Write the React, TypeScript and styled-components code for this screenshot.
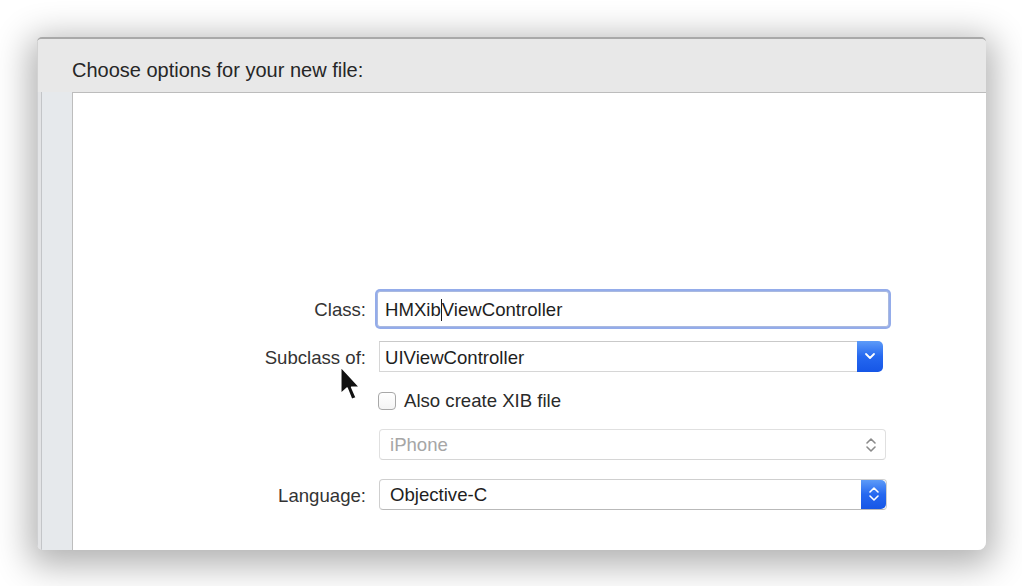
import styled, { createGlobalStyle } from "styled-components";

const GlobalStyle = createGlobalStyle`
  html, body {
    margin: 0;
    padding: 0;
    background: #ffffff;
    overflow: hidden;
  }
  body {
    font-family: "Liberation Sans", Arial, sans-serif;
  }
`;

interface RowProps {
  /** Space above the row, in px */
  $mt: number;
  /** Row height, in px */
  $h: number;
}

const ChevronDown = () => (
  <svg width="12" height="8" viewBox="0 0 12 8">
    <polyline
      points="2,2 6,6 10,2"
      fill="none"
      stroke="#ffffff"
      strokeWidth="1.8"
      strokeLinecap="round"
      strokeLinejoin="round"
    />
  </svg>
);

const UpDown = ({ color }: { color: string }) => (
  <svg width="12" height="18" viewBox="0 0 12 18">
    <polyline
      points="2,7 6,3 10,7"
      fill="none"
      stroke={color}
      strokeWidth="1.6"
      strokeLinecap="round"
      strokeLinejoin="round"
    />
    <polyline
      points="2,11 6,15 10,11"
      fill="none"
      stroke={color}
      strokeWidth="1.6"
      strokeLinecap="round"
      strokeLinejoin="round"
    />
  </svg>
);

/**
 * Xcode "new file" options sheet
 */
const App = () => {
  return (
    <>
      <GlobalStyle />
      <Page>
        <Window>
          <Header>Choose options for your new file:</Header>
          <Body>
            <LeftStrip>
              <StripInner />
            </LeftStrip>
            <Content>
              <Row $mt={197} $h={37}>
                <Label>Class:</Label>
                <TextField>
                  HMXib
                  <Caret />
                  ViewController
                </TextField>
              </Row>
              <Row $mt={13} $h={32}>
                <Label>Subclass of:</Label>
                <ComboBox>
                  <ComboText>UIViewController</ComboText>
                  <BlueButton $w={26}>
                    <ChevronDown />
                  </BlueButton>
                </ComboBox>
              </Row>
              <Row $mt={18} $h={20}>
                <span />
                <CheckRow>
                  <CheckBox />
                  <CheckLabel>Also create XIB file</CheckLabel>
                </CheckRow>
              </Row>
              <Row $mt={19} $h={31}>
                <span />
                <PopUp $disabled>
                  <PopText $disabled>iPhone</PopText>
                  <PlainArrows>
                    <UpDown color="#8a8a8a" />
                  </PlainArrows>
                </PopUp>
              </Row>
              <Row $mt={18} $h={32}>
                <Label>Language:</Label>
                <PopUp>
                  <PopText>Objective-C</PopText>
                  <BlueButton $w={25}>
                    <UpDown color="#ffffff" />
                  </BlueButton>
                </PopUp>
              </Row>
            </Content>
          </Body>
          <Pointer width="23" height="37" viewBox="0 0 20 32">
            <path
              d="M1.5,1.5 L1.5,25 L7,20 L11,30 L15,28.3 L11,19.3 L18,19.3 Z"
              fill="#111111"
              stroke="#ffffff"
              strokeWidth="1.4"
              strokeLinejoin="round"
            />
          </Pointer>
        </Window>
      </Page>
    </>
  );
};

export default App;

const Page = styled.div`
  width: 1022px;
  height: 586px;
  box-sizing: border-box;
  padding: 37px 36px 36px 37px;
  background: #ffffff;
`;

const Window = styled.div`
  position: relative;
  width: 949px;
  height: 513px;
  display: flex;
  flex-direction: column;
  background: #e8e8e8;
  border-radius: 5px 5px 8px 6px;
  border-top: 2px solid #a9a9a9;
  box-sizing: border-box;
  box-shadow: 0 8px 34px 8px rgba(0, 0, 0, 0.3);
  overflow: hidden;
`;

const Header = styled.div`
  height: 53px;
  box-sizing: border-box;
  padding: 20px 0 0 34px;
  font-size: 20px;
  color: #262626;
  background: #e8e8e8;
  border-left: 1px solid #d2d2d2;
`;

const Body = styled.div`
  flex: 1;
  display: flex;
`;

const LeftStrip = styled.div`
  width: 35px;
  display: flex;
  padding-left: 3px;
  box-sizing: border-box;
  background: #e3e4e6;
  border-left: 1px solid #cfd0d2;
`;

const StripInner = styled.div`
  flex: 1;
  background: #e6e9ec;
  border-left: 1px solid #c3c5c8;
`;

const Content = styled.div`
  flex: 1;
  background: #ffffff;
  border-left: 1px solid #bdbdbd;
  border-top: 1px solid #bcbcbc;
  display: flex;
  flex-direction: column;
`;

const Row = styled.div<RowProps>`
  display: grid;
  grid-template-columns: 293px 512px;
  column-gap: 11px;
  align-items: center;
  margin-top: ${(p) => p.$mt}px;
  height: ${(p) => p.$h}px;
`;

const Label = styled.div`
  text-align: right;
  padding-top: 3px;
  font-size: 18.6px;
  color: #333333;
  white-space: nowrap;
`;

const TextField = styled.div`
  height: 36px;
  box-sizing: border-box;
  display: flex;
  align-items: center;
  padding: 3px 0 0 7px;
  font-size: 18.6px;
  color: #1e1e1e;
  background: #ffffff;
  border: 1px solid #a9b9e0;
  border-radius: 3px;
  box-shadow: 0 0 0 2px #94acea;
  white-space: nowrap;
`;

const Caret = styled.span`
  display: inline-block;
  width: 1px;
  height: 22px;
  background: #1a1a1a;
`;

const ComboBox = styled.div`
  margin-left: 2px;
  width: 504px;
  height: 31px;
  display: flex;
  align-items: stretch;
`;

const ComboText = styled.div`
  flex: 1;
  display: flex;
  align-items: center;
  padding: 3px 0 0 5px;
  font-size: 18.6px;
  color: #1e1e1e;
  border: 1px solid #d6d6d6;
  border-top-color: #c9c9c9;
  border-right: none;
  white-space: nowrap;
`;

const BlueButton = styled.div<{ $w: number }>`
  width: ${(p) => p.$w}px;
  display: flex;
  align-items: center;
  justify-content: center;
  background: linear-gradient(#5d9bf8, #2568f0 50%, #1656e6);
  border-radius: 0 5px 5px 0;
`;

const CheckRow = styled.div`
  display: flex;
  align-items: center;
  gap: 8px;
`;

const CheckBox = styled.div`
  margin-left: 1px;
  width: 18px;
  height: 18px;
  box-sizing: border-box;
  border: 1px solid #a8a8a8;
  border-radius: 4px;
  background: linear-gradient(#ffffff, #f4f4f4);
`;

const CheckLabel = styled.span`
  font-size: 18.6px;
  color: #2a2a2a;
  white-space: nowrap;
`;

const PopUp = styled.div<{ $disabled?: boolean }>`
  margin-left: 2px;
  width: ${(p) => (p.$disabled ? 507 : 508)}px;
  height: 31px;
  box-sizing: border-box;
  display: flex;
  align-items: stretch;
  background: #ffffff;
  border: 1px solid ${(p) => (p.$disabled ? "#e0e0e0" : "#cfcfcf")};
  border-bottom-color: ${(p) => (p.$disabled ? "#d6d6d6" : "#b9b9b9")};
  border-radius: 4px;
  overflow: hidden;
`;

const PopText = styled.div<{ $disabled?: boolean }>`
  flex: 1;
  display: flex;
  align-items: center;
  padding: 1px 0 0 10px;
  font-size: 18.6px;
  color: ${(p) => (p.$disabled ? "#a6a6a6" : "#1e1e1e")};
`;

const PlainArrows = styled.div`
  width: 28px;
  display: flex;
  align-items: center;
  justify-content: center;
`;

const Pointer = styled.svg`
  position: absolute;
  left: 302px;
  top: 326px;
`;
